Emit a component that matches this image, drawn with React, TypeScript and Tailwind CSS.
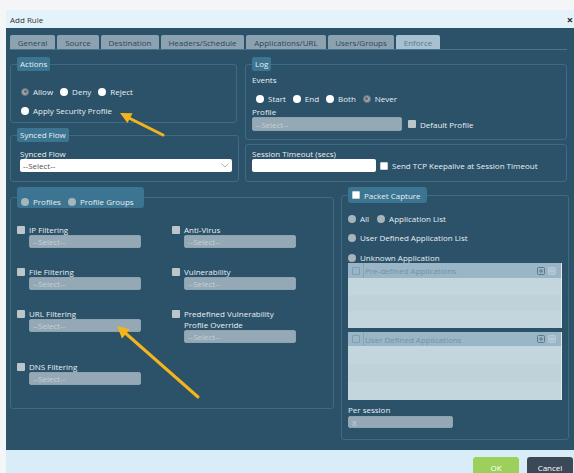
import React from 'react';

const Radio = ({ on, dim }: { on?: boolean; dim?: boolean }) => (
  <span
    className={`w-[8px] h-[8px] rounded-full shrink-0 flex items-center justify-center ${
      on ? 'bg-[#9aa3a8] border border-[#6a7378]' : dim ? 'bg-[#a7b4bc]' : 'bg-white'
    }`}
  >
    {on && <span className="w-[3px] h-[3px] rounded-full bg-[#5f686d]" />}
  </span>
);

const Check = ({ white }: { white?: boolean }) => (
  <span
    className={`block w-[8px] h-[8px] rounded-[1px] shrink-0 ${
      white ? 'bg-white border border-[#c9d2d8]' : 'bg-[#bcc5ca]'
    }`}
  />
);

const Opt = ({ label, on, dim }: { label: string; on?: boolean; dim?: boolean }) => (
  <span className="flex items-center gap-[4px]">
    <Radio on={on} dim={dim} />
    <span>{label}</span>
  </span>
);

const DisSelect = ({ className = '', text = '--Select--' }: { className?: string; text?: string }) => (
  <div
    className={`bg-[#94a8b5] border border-[#8ea3b0] rounded-[2px] pl-[3px] flex items-center text-[#c6d1d7] ${className}`}
  >
    {text}
  </div>
);

const tabs = [
  { name: 'General', w: 'w-[45px]' },
  { name: 'Source', w: 'w-[42px]' },
  { name: 'Destination', w: 'w-[58px]' },
  { name: 'Headers/Schedule', w: 'w-[83px]' },
  { name: 'Applications/URL', w: 'w-[80px]' },
  { name: 'Users/Groups', w: 'w-[66px]' },
  { name: 'Enforce', w: 'w-[44px]', active: true },
];

const ProfileItem = ({ label }: { label: React.ReactNode }) => (
  <div>
    <div className="flex items-start gap-[4px]">
      <span className="block mt-[2px]">
        <Check />
      </span>
      <span>{label}</span>
    </div>
    <DisSelect className="ml-[12px] w-[112px] h-[13px]" />
  </div>
);

const AppGrid = ({ title, head, body }: { title: string; head: string; body: string }) => (
  <div className="w-[214px] border-r border-[#dfe9ee]">
    <div className={`${head} bg-[#9ab5c5] flex items-center pl-[4px] pr-[5px] text-[#7293a6]`}>
      <span className="w-[8px] h-[8px] border border-[#7f9db0] rounded-[1px]" />
      <span className="ml-[3px] w-px h-full bg-[#88a5b6]" />
      <span className="ml-[1px]">{title}</span>
      <span className="ml-auto flex gap-[3px]">
        <svg width="8" height="8" viewBox="0 0 8 8">
          <rect x="0.5" y="0.5" width="7" height="7" rx="1" fill="none" stroke="#5a7a8d" />
          <path d="M2 4h4M4 2v4" stroke="#5a7a8d" strokeWidth="1" />
        </svg>
        <svg width="8" height="8" viewBox="0 0 8 8">
          <rect x="0.5" y="0.5" width="7" height="7" rx="1" fill="#a9c0cd" stroke="#b7cbd6" />
          <path d="M2 4h4" stroke="#c4d5de" strokeWidth="1" />
        </svg>
      </span>
    </div>
    <div className={`${body} bg-[#c2d5dd] flex flex-col`}>
      <div className="flex-1 bg-[#c3d6de]" />
      <div className="flex-1 bg-[#bfd2da]" />
      <div className="flex-1 bg-[#c3d6de]" />
    </div>
  </div>
);

export default function App() {
  return (
    <div className="relative w-[574px] h-[473px] overflow-hidden bg-[#f4f5f6] pt-[10px] pl-[6px] font-['Open_Sans','Liberation_Sans',sans-serif] text-[8px] leading-[11px] text-[#e8eff3]">
      <div className="w-[568px] flex flex-col">
        {/* title bar */}
        <div className="h-[18px] bg-[#e4f2fa] flex items-center justify-between pl-[4px] pr-[1px] text-[#333]">
          <span>Add Rule</span>
          <span className="text-[11px] font-bold text-[#222]">×</span>
        </div>

        {/* body */}
        <div className="h-[422px] bg-[#2b5269] pl-[4px] pt-[7px]">
          <div className="w-[557px] flex gap-[2px] border-b border-[#4a7489]">
            {tabs.map((t) => (
              <div
                key={t.name}
                className={`${t.w} h-[14px] rounded-t-[2px] flex items-center justify-center ${
                  t.active ? 'bg-[#a7c1d1] text-[#59798b]' : 'bg-[#8da2b1] text-[#2b485a]'
                }`}
              >
                {t.name}
              </div>
            ))}
          </div>

          <div className="pt-[7px]">
            <div className="flex gap-[8px]">
              {/* left column */}
              <div className="w-[227px] flex flex-col gap-[5px]">
                <fieldset className="h-[66px] border border-[#3e6b81] rounded-[3px] px-[6px]">
                  <legend className="h-[14px] leading-[14px] bg-[#3c7591] px-[3px] rounded-[2px]">Actions</legend>
                  <div className="mt-[15px] pl-[4px] flex items-center gap-[7px]">
                    <Opt label="Allow" on />
                    <Opt label="Deny" />
                    <Opt label="Reject" />
                  </div>
                  <div className="mt-[8px] pl-[4px] flex">
                    <Opt label="Apply Security Profile" />
                  </div>
                </fieldset>

                <fieldset className="h-[54px] border border-[#3e6b81] rounded-[3px] px-[6px]">
                  <legend className="h-[14px] leading-[14px] bg-[#3c7591] px-[3px] rounded-[2px]">Synced Flow</legend>
                  <div className="mt-[6px] pl-[3px]">Synced Flow</div>
                  <div className="ml-[3px] w-[212px] h-[13px] bg-white rounded-[2px] flex items-center justify-between pl-[3px] pr-[3px] text-[#555]">
                    <span>--Select--</span>
                    <svg width="8" height="5" viewBox="0 0 8 5">
                      <path d="M0.5 0.5L4 4L7.5 0.5" fill="none" stroke="#aab2b7" strokeWidth="1" />
                    </svg>
                  </div>
                </fieldset>
              </div>

              {/* right column */}
              <div className="w-[322px] flex flex-col gap-[4px]">
                <fieldset className="h-[83px] border border-[#3e6b81] rounded-[3px] px-[6px]">
                  <legend className="h-[14px] leading-[14px] bg-[#3c7591] px-[3px] rounded-[2px]">Log</legend>
                  <div className="mt-[3px]">Events</div>
                  <div className="mt-[8px] pl-[4px] flex items-center gap-[7px]">
                    <Opt label="Start" />
                    <Opt label="End" />
                    <Opt label="Both" />
                    <Opt label="Never" on />
                  </div>
                  <div className="mt-[2px]">Profile</div>
                  <div className="flex items-center">
                    <DisSelect className="w-[150px] h-[14px]" />
                    <span className="block ml-[6px]">
                      <Check />
                    </span>
                    <span className="ml-[4px]">Default Profile</span>
                  </div>
                </fieldset>

                <fieldset className="h-[38px] border border-[#3e6b81] rounded-[3px] px-[6px]">
                  <div className="mt-[3px]">Session Timeout (secs)</div>
                  <div className="flex items-center">
                    <div className="w-[124px] h-[13px] bg-white rounded-[2px]" />
                    <span className="block ml-[4px]">
                      <Check white />
                    </span>
                    <span className="ml-[4px]">Send TCP Keepalive at Session Timeout</span>
                  </div>
                </fieldset>
              </div>
            </div>

            <div className="mt-[5px] flex gap-[7px]">
              {/* profiles */}
              <fieldset className="w-[323px] h-[222px] border border-[#3e6b81] rounded-[3px] px-[6px]">
                <legend className="h-[21px] bg-[#3c7591] rounded-[3px] pl-[4px] pr-[10px]">
                  <div className="h-full flex items-end pb-[1px] gap-[7px]">
                    <Opt label="Profiles" dim />
                    <Opt label="Profile Groups" dim />
                  </div>
                </legend>
                <div className="mt-[16px] grid grid-cols-[155px_155px] gap-y-[18px]">
                  <ProfileItem label="IP Filtering" />
                  <ProfileItem label="Anti-Virus" />
                  <ProfileItem label="File Filtering" />
                  <ProfileItem label="Vulnerability" />
                  <ProfileItem label="URL Filtering" />
                  <ProfileItem
                    label={
                      <>
                        Predefined Vulnerability
                        <br />
                        Profile Override
                      </>
                    }
                  />
                  <ProfileItem label="DNS Filtering" />
                </div>
              </fieldset>

              {/* packet capture */}
              <fieldset className="w-[227px] h-[253px] border border-[#3e6b81] rounded-[3px] px-[6px]">
                <legend className="h-[16px] bg-[#3c7591] rounded-[3px] pl-[4px] pr-[6px]">
                  <div className="h-full flex items-center gap-[4px]">
                    <Check white />
                    <span>Packet Capture</span>
                  </div>
                </legend>
                <div className="mt-[10px] flex items-center gap-[8px]">
                  <Opt label="All" dim />
                  <Opt label="Application List" dim />
                </div>
                <div className="mt-[8px] flex">
                  <Opt label="User Defined Application List" dim />
                </div>
                <div className="mt-[9px] flex">
                  <Opt label="Unknown Application" dim />
                </div>
                <AppGrid title="Pre-defined Applications" head="h-[15px]" body="h-[50px]" />
                <div className="mt-[4px]">
                  <AppGrid title="User Defined Applications" head="h-[14px]" body="h-[54px]" />
                </div>
                <div className="mt-[4px]">Per session</div>
                <DisSelect className="mt-[1px] w-[105px] h-[12px]" text="8" />
              </fieldset>
            </div>
          </div>
        </div>

        {/* footer */}
        <div className="h-[30px] bg-[#d8edf8] flex justify-end gap-[8px] pt-[7px] pr-[1px]">
          <button className="w-[46px] h-[20px] rounded-[3px] bg-[#9ccf5b] text-white text-[8px]">OK</button>
          <button className="w-[46px] h-[20px] rounded-[3px] bg-[#3b4957] text-white text-[8px]">Cancel</button>
        </div>
      </div>

      {/* annotation arrows */}
      <svg className="absolute inset-0 pointer-events-none" width="574" height="473" viewBox="0 0 574 473">
        <line x1="163" y1="135" x2="127" y2="117" stroke="#f4b51c" strokeWidth="3" strokeLinecap="round" />
        <polygon points="120,113 132.5,113.3 127.5,123" fill="#f4b51c" />
        <line x1="198" y1="397" x2="123" y2="331" stroke="#f4b51c" strokeWidth="3" strokeLinecap="round" />
        <polygon points="117,326 129.8,329.3 122,338.5" fill="#f4b51c" />
      </svg>
    </div>
  );
}
